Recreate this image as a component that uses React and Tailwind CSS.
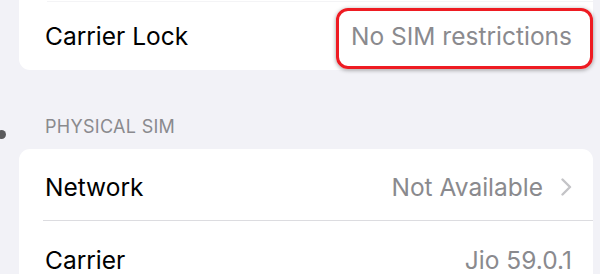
export default function App() {
  const font = { fontFamily: 'Inter, "Noto Sans", "Liberation Sans", sans-serif' };
  return (
    <div className="w-[600px] h-[274px] overflow-hidden bg-[#f2f2f7] relative" style={font}>
      <div className="absolute left-[-3px] top-[130px] w-[9px] h-[9px] rounded-full bg-[#5a5a5c]" />
      <div className="ml-[19px] mr-[7px] bg-white rounded-b-[11px]">
        <div className="h-[1px]" />
        <div className="ml-[28px] h-[1px] bg-[#f4f4f6]" />
        <div className="h-[68px] flex items-center justify-between pl-[26px] pr-[21px]">
          <span className="text-[24.5px] leading-[30px] text-black">Carrier Lock</span>
          <div className="relative">
            <span className="block text-[24.5px] leading-[30px] text-[#8a8a8e]">No SIM restrictions</span>
            <div className="absolute left-[-15px] right-[-21px] top-[-13px] bottom-[-18px] border-[3.5px] border-[#ee1b22] rounded-[12px] shadow-[0_1px_4px_rgba(0,0,0,0.4)]" />
          </div>
        </div>
      </div>
      <div className="pl-[45px] pt-[46px] pb-[11px] text-[18px] leading-[22px] text-[#8a8a8e] tracking-[0.3px]">PHYSICAL SIM</div>
      <div className="ml-[19px] mr-[7px] bg-white rounded-[11px]">
        <div className="h-[71px] flex items-center justify-between pl-[26px] pr-[21px] pt-[5px]">
          <span className="text-[24.5px] leading-[30px] text-black">Network</span>
          <div className="flex items-center gap-[18px]">
            <span className="text-[24.5px] leading-[30px] text-[#8a8a8e]">Not Available</span>
            <svg width="11" height="18" viewBox="0 0 11 18" fill="none">
              <path d="M1.5 1.5 L9 9 L1.5 16.5" stroke="#c4c4c7" strokeWidth="2.4" strokeLinecap="round" strokeLinejoin="round" />
            </svg>
          </div>
        </div>
        <div className="ml-[24px] h-[1px] bg-[#dcdce0]" />
        <div className="h-[71px] flex items-center justify-between pl-[26px] pr-[21px] pt-[6px]">
          <span className="text-[24.5px] leading-[30px] text-black">Carrier</span>
          <span className="text-[24.5px] leading-[30px] text-[#8a8a8e]">Jio 59.0.1</span>
        </div>
      </div>
    </div>
  );
}
